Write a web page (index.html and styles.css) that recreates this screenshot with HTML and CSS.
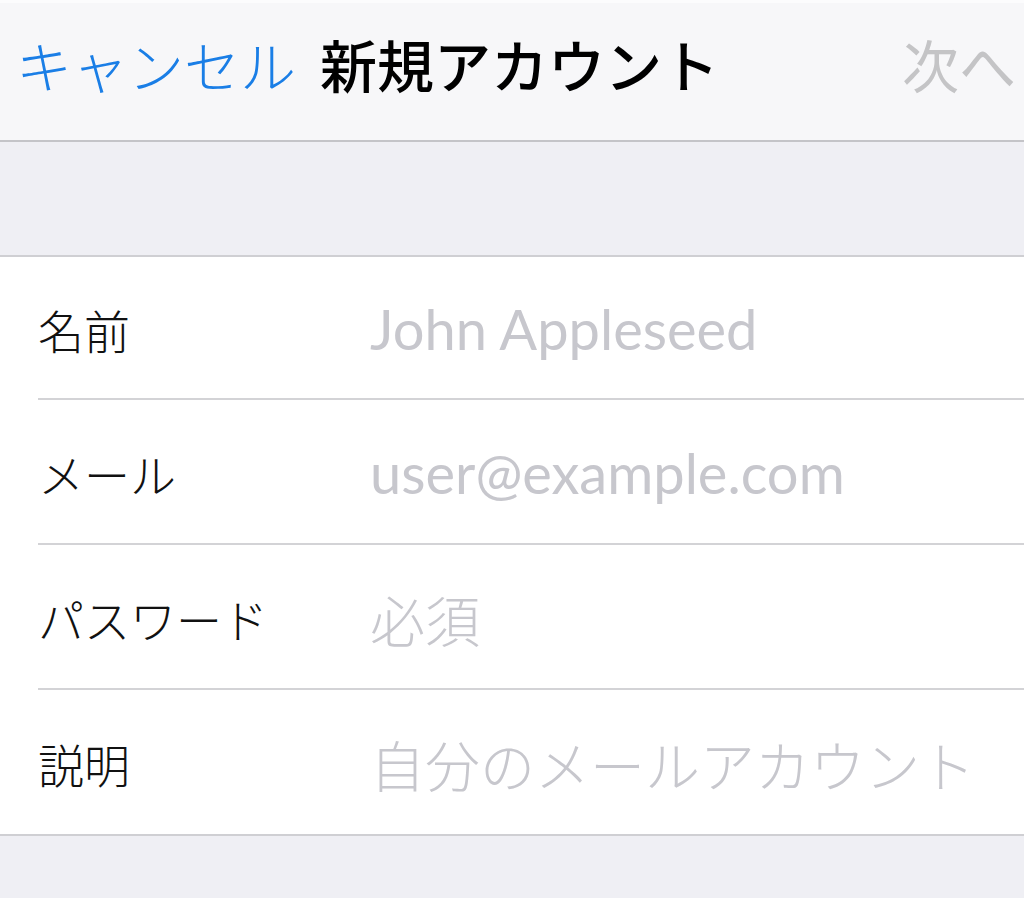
FILE: index.html
```html
<!DOCTYPE html>
<html lang="ja">
<head>
<meta charset="utf-8">
<title>新規アカウント</title>
<link rel="stylesheet" href="styles.css">
</head>
<body>
<header class="nav">
  <span class="nav-cancel">キャンセル</span>
  <span class="nav-title">新規アカウント</span>
  <span class="nav-next">次へ</span>
</header>
<div class="spacer"></div>
<section class="form">
  <div class="row">
    <span class="label">名前</span>
    <span class="value latin">John Appleseed</span>
  </div>
  <div class="row">
    <span class="label">メール</span>
    <span class="value latin">user@example.com</span>
  </div>
  <div class="row">
    <span class="label">パスワード</span>
    <span class="value">必須</span>
  </div>
  <div class="row last">
    <span class="label">説明</span>
    <span class="value">自分のメールアカウント</span>
  </div>
</section>
<div class="footer"></div>
</body>
</html>
```
FILE: styles.css
```css
html, body {
  margin: 0;
  padding: 0;
}
body {
  width: 1024px;
  height: 898px;
  overflow: hidden;
  background: #efeff4;
  font-family: "Noto Sans CJK JP", "Noto Sans", sans-serif;
}
.nav {
  box-sizing: border-box;
  height: 142px;
  border-top: 3px solid #fcfcfd;
  border-bottom: 2px solid #c4c4c8;
  background: #f7f7f9;
  display: flex;
  align-items: center;
  padding: 0 8px 16px 16px;
  font-size: 56px;
  line-height: 1;
}
.nav-cancel {
  color: #1a7ee6;
  font-weight: 300;
}
.nav-title {
  margin-left: 24px;
  color: #000;
  font-weight: 500;
  font-size: 57px;
}
.nav-next {
  margin-left: auto;
  color: #c4c4c6;
  font-weight: 400;
  font-size: 57px;
}
.spacer {
  height: 113px;
  border-bottom: 2px solid #cfcfd3;
  background: #efeff4;
}
.form {
  background: #fff;
  border-bottom: 2px solid #cfcfd3;
  padding-left: 38px;
}
.row {
  box-sizing: border-box;
  height: 145px;
  display: flex;
  align-items: center;
  border-bottom: 2px solid #d3d3d6;
  padding-top: 2px;
}
.row:first-child {
  height: 143px;
}
.row.last {
  border-bottom: none;
  height: 144px;
}
.label {
  width: 332px;
  font-size: 46px;
  font-weight: 300;
  color: #111;
}
.value {
  font-size: 55px;
  font-weight: 300;
  color: #c7c7cd;
}
.value.latin {
  font-family: "Lato", "Noto Sans CJK JP", sans-serif;
  font-weight: 400;
  font-size: 56px;
}
.footer {
  height: 64px;
  background: #efeff4;
}
```
